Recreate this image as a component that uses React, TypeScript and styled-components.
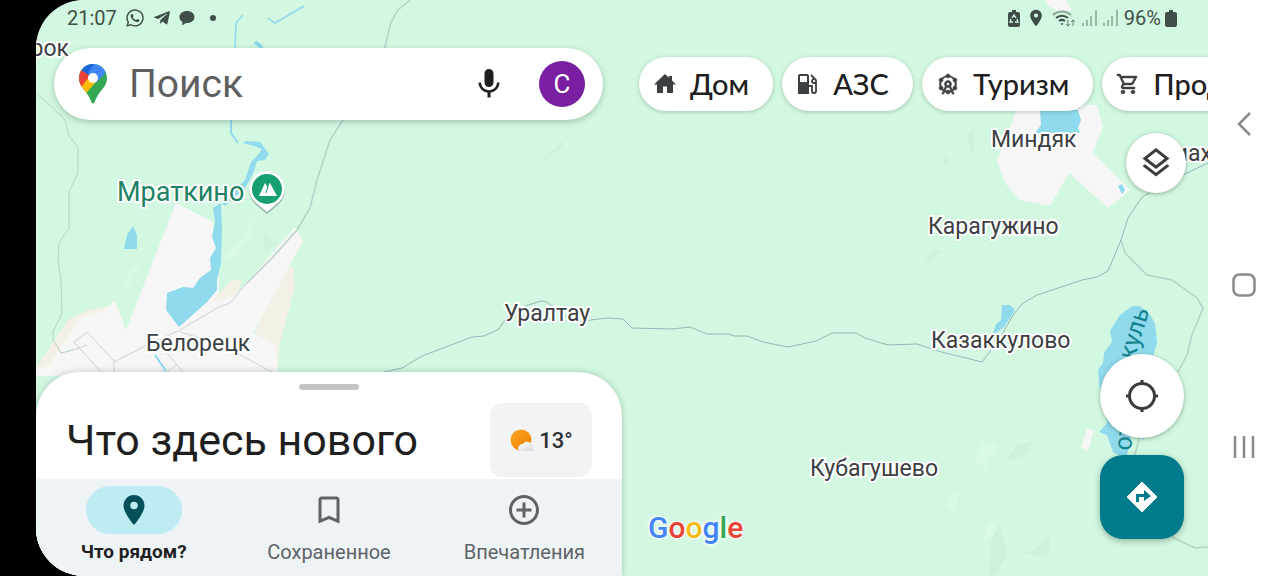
import React from "react";
import styled, { createGlobalStyle } from "styled-components";
import { FaWhatsapp, FaTelegramPlane } from "react-icons/fa";
import {
  MdMic,
  MdOutlineAttractions,
  MdOutlineShoppingCart,
  MdOutlineLayers,
  MdLocationOn,
  MdBookmarkBorder,
  MdAddCircleOutline,
} from "react-icons/md";

const GlobalStyle = createGlobalStyle`
  * { box-sizing: border-box; }
  body {
    margin: 0;
    background: #000;
    font-family: Roboto, "Noto Sans", sans-serif;
    color: #1f1f1f;
  }
  button {
    font: inherit;
    color: inherit;
    border: 0;
    padding: 0;
    background: none;
    cursor: pointer;
  }
  svg { display: block; flex: none; }
`;

const Device = styled.div`
  display: flex;
  min-height: 100vh;
  padding-left: 36px;
  background: linear-gradient(to right, #000 50%, #fff 50%);
`;

const Screen = styled.main`
  position: relative;
  flex: 1;
  min-width: 0;
  display: grid;
  grid-template-columns: minmax(0, 1fr) minmax(0, 1fr);
  grid-template-rows: auto auto 1fr;
  overflow: hidden;
  border-radius: 48px 0 0 48px;
  background: #d3f8e2;
`;

const MapCanvas = styled.svg`
  position: absolute;
  inset: 0;
  width: 100%;
  height: 100%;
`;

const PlaceName = styled.text<{ $size?: number; $color?: string }>`
  font-size: ${(p) => p.$size ?? 23}px;
  fill: ${(p) => p.$color ?? "#3c4043"};
  stroke: #fff;
  stroke-width: 4px;
  stroke-linejoin: round;
  paint-order: stroke;
`;

const WaterName = styled.text`
  font-size: 25px;
  fill: #14838f;
`;

const StatusBar = styled.header`
  position: relative;
  grid-column: 1 / -1;
  display: flex;
  justify-content: space-between;
  height: 36px;
  padding: 0 31px;
  font-size: 20px;
  line-height: 36px;
  color: #3f4f47;
`;

const StatusGroup = styled.div<{ $gap: number }>`
  display: flex;
  align-items: center;
  gap: ${(p) => p.$gap}px;
`;

const Battery = styled.span`
  display: flex;
  align-items: center;
  gap: 4px;
`;

const SearchArea = styled.div`
  position: relative;
  padding: 12px 19px 0 18px;
`;

const SearchBar = styled.form`
  display: flex;
  align-items: center;
  height: 72px;
  padding: 0 18px 0 25px;
  border-radius: 36px;
  background: #fff;
  box-shadow: 0 2px 6px rgba(60, 100, 80, 0.35);
`;

const SearchInput = styled.input`
  flex: 1;
  min-width: 0;
  height: 56px;
  margin-left: 22px;
  padding: 0;
  border: 0;
  outline: 0;
  background: none;
  font-family: inherit;
  font-size: 39px;
  color: #5f5f5f;
  &::placeholder { color: #5f5f5f; opacity: 1; }
`;

const Avatar = styled.button`
  width: 46px;
  height: 46px;
  margin-left: 32px;
  border-radius: 50%;
  background: #7b1fa2;
  color: #fff;
  font-size: 26px;
  line-height: 46px;
`;

const Chips = styled.nav`
  position: relative;
  display: flex;
  align-items: center;
  gap: 9px;
  height: 84px;
  padding: 12px 0 0 17px;
  overflow: hidden;
`;

const Chip = styled.button`
  display: flex;
  flex: none;
  align-items: center;
  gap: 13px;
  height: 54px;
  padding: 0 24px 0 14px;
  border-radius: 27px;
  background: #fff;
  box-shadow: 0 1px 4px rgba(60, 100, 80, 0.35);
  font-family: Lato, Roboto, sans-serif;
  font-size: 29px;
  line-height: 54px;
  font-weight: 500;
  svg { color: #3c4043; }
`;

const FerrisWheelIcon = styled(MdOutlineAttractions)`
  path:last-child {
    stroke: currentColor;
    stroke-width: 0.6px;
  }
`;

const CartIcon = styled(MdOutlineShoppingCart)`
  path:last-child {
    stroke: currentColor;
    stroke-width: 0.4px;
  }
`;

const Sheet = styled.section`
  position: relative;
  align-self: end;
  border-radius: 44px 44px 0 0;
  background: #fff;
  box-shadow: 0 0 6px rgba(60, 100, 80, 0.35);
  overflow: hidden;
`;

const Handle = styled.div`
  width: 60px;
  height: 6px;
  margin: 12px auto 13px;
  border-radius: 3px;
  background: #c4c4c4;
`;

const SheetHeader = styled.div`
  display: flex;
  align-items: center;
  justify-content: space-between;
  padding: 0 30px 2px;
`;

const SheetTitle = styled.h1`
  margin: 0;
  font-size: 43px;
  line-height: 74px;
  font-weight: 400;
`;

const Weather = styled.button`
  display: flex;
  align-items: center;
  justify-content: center;
  gap: 6px;
  width: 102px;
  height: 74px;
  border-radius: 12px;
  background: #f1f3f5;
  font-size: 22px;
  font-weight: 500;
  color: #303134;
`;

const Tabs = styled.nav`
  display: grid;
  grid-template-columns: repeat(3, 1fr);
  height: 97px;
  padding-top: 7px;
  background: #eef3f6;
`;

const Tab = styled.button<{ $active?: boolean }>`
  display: flex;
  flex-direction: column;
  align-items: center;
  height: 83px;
  gap: 6px;
  font-size: ${(p) => (p.$active ? 19 : 20)}px;
  line-height: 24px;
  font-weight: ${(p) => (p.$active ? 700 : 400)};
  color: ${(p) => (p.$active ? "#1f1f1f" : "#5f6368")};
`;

const TabIcon = styled.span<{ $active?: boolean }>`
  display: grid;
  place-items: center;
  width: 96px;
  height: 48px;
  border-radius: 24px;
  background: ${(p) => (p.$active ? "#bfebf3" : "transparent")};
  color: ${(p) => (p.$active ? "#04505a" : "inherit")};
`;

const MapControls = styled.div`
  position: relative;
  display: flex;
  flex-direction: column;
  align-items: flex-end;
  justify-content: space-between;
  padding: 13px 22px 37px 26px;
`;

const LowerControls = styled.div`
  display: flex;
  align-items: flex-end;
  justify-content: space-between;
  width: 100%;
  padding-right: 2px;
`;

const Fabs = styled.div`
  display: flex;
  flex-direction: column;
  gap: 17px;
`;

const RoundButton = styled.button<{ $size: number }>`
  display: grid;
  place-items: center;
  width: ${(p) => p.$size}px;
  height: ${(p) => p.$size}px;
  border-radius: 50%;
  background: #fff;
  color: #3c3c3f;
  box-shadow: 0 1px 4px rgba(60, 100, 80, 0.5);
`;

const DirectionsButton = styled.button`
  display: grid;
  place-items: center;
  width: 84px;
  height: 84px;
  border-radius: 23px;
  background: #007b8b;
  box-shadow: 0 2px 6px rgba(60, 100, 80, 0.45);
`;

const Wordmark = styled.div`
  font-size: 30px;
  line-height: 22px;
  font-weight: 500;
  text-shadow: 0 0 2px #fff, 0 0 3px #fff, 0 0 4px #fff;
`;

const Letter = styled.span<{ $color: string }>`
  color: ${(p) => p.$color};
`;

const SystemNav = styled.nav`
  display: grid;
  grid-template-rows: repeat(3, 1fr);
  width: 72px;
  padding: 43px 0 48px;
  background: #fff;
`;

const SystemButton = styled.button`
  display: grid;
  place-items: center;
`;

const MapArt = () => (
  <MapCanvas viewBox="36 0 1172 576" preserveAspectRatio="xMinYMin slice">
    <rect x="36" width="1172" height="576" fill="#d3f8e2" />
    <g fill="#cdf2dc">
      <path d="M540 163l28-28-8 14z" />
      <path d="M924 265l6-12 14-3z" />
      <path d="M1006 460l10-14 18-6-10 16-12 5z" />
      <path d="M990 560l2-22 8-12 7 28-12 22h-6z" />
      <path d="M1017 552h14l19-16v16l-10 4z" />
      <path d="M967 136l8-10-1 34z" />
      <path d="M942 165l5-12 2 12z" />
      <path d="M263 235l16 8-14 9z" />
    </g>
    <g fill="#d9fae6">
      <path d="M975 458l8-16 14 2-12 26z" />
      <path d="M946 505l4-10 10-2-6 18z" />
      <path d="M984 545l2-18 10-6-2 14z" />
      <path d="M223 260l20-24 12-20-5 20-14 20z" />
      <path d="M122 294l8-24 12-12-14 28z" />
    </g>

    <g fill="#f5f0e5">
      <path d="M36 368l32-48 20-10 22-4v66H36z" />
      <path d="M206 306l14-13 12-14 10 2-6 16-20 20z" />
      <path d="M255 332l25-60 13-6 2 20-16 60-1 26h-20z" />
    </g>
    <g fill="#f6f6f6">
      <path d="M176 203l37 19 6 58-1 16-8 6 25-6 60-69 8 14-50 92 22 12 4 31H36v-6l14-5 4-8 26-38 24-8 11-10 11 29z" />
      <path d="M1017 105h80l6 22-10 25 37 38-22 18-39-35-19 33-30-6-15-17-8-23 15-37z" />
      <path d="M1046 0h20l6 10-12 2-12-6z" />
      <path d="M1087 429l7 1-6 22-7-5z" />
    </g>

    <g fill="#90daee">
      <path d="M213 208l8-5 1 27-1 33-4 17v10l-10 12-28 25-13-17 1-17 16-6 10 1 7-10 11-8-1-12 6-10-4-11 3-15z" />
      <path d="M133 226l4 9v14h-13l3-14z" />
      <path d="M243 143l3-2 14 1 9 12-4 6-8 1-4 13-8 14-14 12-6 6-3-2 11-12 12-12 6-18 6-6 5-7-8-3z" />
      <path d="M1040 110h38l3 10-3 8 2 5h-45l6-8z" />
      <path d="M1118 186l4-2 3 6-3 4z" />
      <path d="M1002 305l8 0 5 5-11 17-8 6h-3l3-9 5-4z" />
      <path d="M1132 306h8l10 9 5 8 2 20-5 17-8 80-12-8-5 23h-9l-5-3-6-17-8-3 8-9-7-33-2-20 5-7 1-10 8-11-2-11 10-16z" />
    </g>
    <g fill="none" stroke="#90d8ee" strokeWidth="2">
      <path d="M243 15l-7 8-1 25" strokeWidth="1.500" />
      <path d="M231 120v13l7 10" />
      <path d="M268 18l7 5 29-17" strokeWidth="1.500" />
      <path d="M255 42l5 4 2 2" strokeWidth="4" />
      <path d="M155 355l11 16" />
    </g>

    <g fill="none" stroke="#b5d2ca" strokeWidth="1">
      <path d="M38 95l15 13 12 12 4 16 9 11v26l-9 19v36l-10 15-1 17 3 20 1 33-9 19v8l8 13 12-3" />
      <path d="M410 0l-12 10-7 12-6 25-42 73-13 20-13 40-7 28-13 22-24 27-26 26" strokeWidth="1.500" />
      <path d="M1121 240l4 13 22 22 25 5 25 18 6 10-11 27-5 20-9 17" strokeWidth="1.500" />
      <path d="M1140 436l-6 22M1172 537l23 11 13-1" strokeWidth="1.500" />
    </g>
    <g fill="none" stroke="#cdd2da" strokeWidth="1">
      <path d="M247 283l-17 20-13 5-37 22-37 17-29 15v12" />
      <path d="M73 350l14-5M103 374l-29-32 13-10 28 30M167 353l16 19M180 332l40 12 52 28M165 374l12-10" />
    </g>
    <path
      d="M1208 163l-23 11-43 23-14 21-7 22-13 31-11 6-15 3-45 15-15 9-9 11-13 23-18 24-44-11-21-7L888 345l-23-7-9-5h-24l-16 8-28 6-25-5-16-6h-13l-5-2h-22l-17-7-18 2-40-1-9-9-16-1-16 2-16 2L554 308l-7-6-6-1-19 6-16 11-7 11-15 7-12 1-50 19-20 12-18 4"
      fill="none"
      stroke="#93b6b8"
      strokeWidth="1"
    />

    <PlaceName x="69" y="56" textAnchor="end">рок</PlaceName>
    <PlaceName x="117" y="201" $size={27} $color="#1c8264">Мраткино</PlaceName>
    <PlaceName x="146" y="351">Белорецк</PlaceName>
    <PlaceName x="504" y="321">Уралтау</PlaceName>
    <PlaceName x="810" y="476">Кубагушево</PlaceName>
    <PlaceName x="931" y="348">Казаккулово</PlaceName>
    <PlaceName x="928" y="234">Карагужино</PlaceName>
    <PlaceName x="991" y="147">Миндяк</PlaceName>
    <PlaceName x="1171" y="161">мах</PlaceName>
    <WaterName transform="translate(1134 361) rotate(-73)">куль</WaterName>
    <WaterName transform="translate(1131 451) rotate(-85)">от</WaterName>

    <path d="M267 172a18 18 0 0 0-12 31l12 10 12-10a18 18 0 0 0-12-31z" fill="#9ab8a8" transform="translate(0 1)" />
    <path d="M267 171a18 18 0 0 0-12 31l12 10 12-10a18 18 0 0 0-12-31z" fill="#fff" />
    <circle cx="267" cy="189" r="15" fill="#16a06f" />
    <path d="M259 196l6-13 3 5 1-4 1-1 7 13z" fill="#fff" />
    <path d="M268 187l-2 6" stroke="#16a06f" />
  </MapCanvas>
);

const MapsPin = () => (
  <svg width="28" height="40" viewBox="0 0 28 40">
    <clipPath id="pin">
      <path d="M14 0C6.300 0 0 6.200 0 14c0 9 7.500 12.500 11.300 21.500C12.300 38 12.700 39.500 14 39.500s1.700-1.500 2.700-4C20.500 26.500 28 23 28 14 28 6.200 21.700 0 14 0z" />
    </clipPath>
    <g clipPath="url(#pin)">
      <path d="M0 0h28v40H0z" fill="#34a853" />
      <path d="M-1 23L10 10l11 3L4 33z" fill="#fbbc04" />
      <path d="M-1 4l4 1 8 7-9 11h-3z" fill="#ea4335" />
      <path d="M2 6L8-1h8l-5 13z" fill="#1a66d9" />
      <path d="M9 9l7-10h14v6L18 18z" fill="#4285f4" />
    </g>
    <circle cx="14" cy="14" r="5" fill="#fff" />
  </svg>
);

const HouseIcon = () => (
  <svg width="24" height="24" viewBox="0 0 24 24" fill="currentColor">
    <path d="M12 2L1 12.500h3V21h6v-6.500h4V21h6v-8.500h3l-4-4V4h-3v1.800z" />
  </svg>
);

const FuelIcon = () => (
  <svg width="24" height="24" viewBox="0 0 24 24" fill="none" stroke="currentColor">
    <path d="M2 22V4a2 2 0 0 1 2-2h7a2 2 0 0 1 2 2v18z" fill="currentColor" stroke="none" />
    <path d="M4 4h7v6H4z" fill="#fff" stroke="none" />
    <path d="M15 3l5 5v11a2 2 0 0 1-4 0v-5h-3M20 11h-2a2 2 0 1 1 0-4" strokeWidth="1.800" />
  </svg>
);

const LocateIcon = () => (
  <svg width="34" height="34" viewBox="0 0 34 34" fill="none" stroke="currentColor" strokeWidth="3">
    <circle cx="17" cy="17" r="12.500" />
    <path d="M17 1v5M17 28v5M1 17h5M28 17h5" />
  </svg>
);

const DirectionsIcon = () => (
  <svg width="32" height="32" viewBox="0 0 32 32">
    <path d="M16 1l15 15-15 15L1 16z" fill="#fff" stroke="#fff" strokeWidth="1" strokeLinejoin="round" />
    <path d="M10 21v-8h8V9l7 6-7 5v-4h-5v5z" fill="#007b8b" />
  </svg>
);

const SunCloud = () => (
  <svg width="24" height="24" viewBox="0 0 24 24">
    <defs>
      <linearGradient id="sun" x1="0" y1="0" x2="1" y2="1">
        <stop offset="0" stopColor="#f9a825" />
        <stop offset="1" stopColor="#f57c00" />
      </linearGradient>
      <linearGradient id="cloud" x1="0" y1="0" x2="1" y2="1">
        <stop offset="0" stopColor="#fff" />
        <stop offset="1" stopColor="#d5d8dc" />
      </linearGradient>
    </defs>
    <circle cx="12" cy="12" r="10.500" fill="url(#sun)" />
    <path d="M11 23a3 3 0 0 1-1-5 4 4 0 0 1 4-2 5 5 0 0 1 9 1 3 3 0 0 1-2 6z" fill="url(#cloud)" />
  </svg>
);

const ChatBubble = () => (
  <svg width="16" height="16" viewBox="0 0 16 16" fill="currentColor">
    <path d="M8 1c4.200 0 7.500 2.600 7.500 6S12.200 13 8 13h-1l-4 2.500.5-3.500C1.700 11 .5 9.200.5 7 .5 3.600 3.800 1 8 1z" />
  </svg>
);

const BatterySaver = () => (
  <svg width="12" height="17" viewBox="0 0 12 17">
    <path d="M4 0h4v2h2a2 2 0 0 1 2 2v11a2 2 0 0 1-2 2H2a2 2 0 0 1-2-2V4a2 2 0 0 1 2-2h2z" fill="currentColor" />
    <path d="M4 8l2-3 2 3M9 9l1 3H7M5 12H2l1-3" stroke="#d3f8e2" fill="none" strokeWidth="1.300" />
  </svg>
);

const Wifi = () => (
  <svg width="24" height="18" viewBox="0 0 24 18" fill="none" stroke="currentColor" strokeWidth="2">
    <path d="M1 6a13 13 0 0 1 18 0" opacity=".5" />
    <path d="M4 9a9 9 0 0 1 12 0M7 12a5 5 0 0 1 6 0" />
    <circle cx="10" cy="15" r="1" fill="currentColor" stroke="none" />
    <path d="M16 11v6m-2-2l2 2 2-2M21 17v-6m-2 2l2-2 2 2" strokeWidth="1" opacity=".7" />
  </svg>
);

const Signal = () => (
  <svg width="15" height="16" viewBox="0 0 15 16" stroke="#9bb7a8" strokeWidth="2">
    <path d="M1 16v-3M5 16v-6M9 16V6M14 16V0" />
  </svg>
);

const FullBattery = () => (
  <svg width="12" height="17" viewBox="0 0 12 17" fill="currentColor">
    <path d="M4 0h4v2h2a2 2 0 0 1 2 2v11a2 2 0 0 1-2 2H2a2 2 0 0 1-2-2V4a2 2 0 0 1 2-2h2z" />
  </svg>
);

const letters: [string, string][] = [
  ["G", "#4285f4"],
  ["o", "#ea4335"],
  ["o", "#f4b912"],
  ["g", "#4285f4"],
  ["l", "#34a853"],
  ["e", "#ea4335"],
];

export default function App() {
  return (
    <>
      <GlobalStyle />
      <Device>
        <Screen>
          <MapArt />

          <StatusBar>
            <StatusGroup $gap={8}>
              <span>21:07</span>
              <FaWhatsapp size={20} />
              <FaTelegramPlane size={18} />
              <ChatBubble />
              <svg width="20" height="8" viewBox="0 0 20 8">
                <circle cx="10" cy="4" r="3" fill="currentColor" />
              </svg>
            </StatusGroup>
            <StatusGroup $gap={6}>
              <BatterySaver />
              <MdLocationOn size={20} />
              <Wifi />
              <Signal />
              <Signal />
              <Battery>
                96%
                <FullBattery />
              </Battery>
            </StatusGroup>
          </StatusBar>

          <SearchArea>
            <SearchBar role="search" onSubmit={(e) => e.preventDefault()}>
              <MapsPin />
              <SearchInput type="text" aria-label="Поиск" placeholder="Поиск" />
              <button type="button" aria-label="Голосовой поиск">
                <MdMic size={36} />
              </button>
              <Avatar type="button">C</Avatar>
            </SearchBar>
          </SearchArea>

          <Chips>
            <Chip><HouseIcon />Дом</Chip>
            <Chip><FuelIcon />АЗС</Chip>
            <Chip><FerrisWheelIcon size={24} />Туризм</Chip>
            <Chip><CartIcon size={24} />Продукты</Chip>
          </Chips>

          <Sheet>
            <Handle />
            <SheetHeader>
              <SheetTitle>Что здесь нового</SheetTitle>
              <Weather>
                <SunCloud />
                13°
              </Weather>
            </SheetHeader>
            <Tabs>
              <Tab $active>
                <TabIcon $active><MdLocationOn size={36} /></TabIcon>
                Что рядом?
              </Tab>
              <Tab>
                <TabIcon><MdBookmarkBorder size={36} /></TabIcon>
                Сохраненное
              </Tab>
              <Tab>
                <TabIcon><MdAddCircleOutline size={36} /></TabIcon>
                Впечатления
              </Tab>
            </Tabs>
          </Sheet>

          <MapControls>
            <RoundButton $size={60} aria-label="Слои">
              <MdOutlineLayers size={36} />
            </RoundButton>
            <LowerControls>
              <Wordmark>
                {letters.map(([char, color], i) => (
                  <Letter key={i} $color={color}>{char}</Letter>
                ))}
              </Wordmark>
              <Fabs>
                <RoundButton $size={84} aria-label="Моё местоположение">
                  <LocateIcon />
                </RoundButton>
                <DirectionsButton aria-label="Маршруты">
                  <DirectionsIcon />
                </DirectionsButton>
              </Fabs>
            </LowerControls>
          </MapControls>
        </Screen>

        <SystemNav>
          <SystemButton aria-label="Назад">
            <svg width="14" height="24" viewBox="0 0 14 24" fill="none" stroke="#8a8a8a" strokeWidth="2.500">
              <path d="M13 1L2 12l11 11" />
            </svg>
          </SystemButton>
          <SystemButton aria-label="Главный экран">
            <svg width="24" height="24" viewBox="0 0 24 24" fill="none" stroke="#8a8a8a" strokeWidth="2.500">
              <rect x="1.500" y="1.500" width="21" height="21" rx="6" />
            </svg>
          </SystemButton>
          <SystemButton aria-label="Недавние">
            <svg width="22" height="22" viewBox="0 0 22 22" stroke="#8a8a8a" strokeWidth="2.500">
              <path d="M2 0v22M11 0v22M20 0v22" />
            </svg>
          </SystemButton>
        </SystemNav>
      </Device>
    </>
  );
}
